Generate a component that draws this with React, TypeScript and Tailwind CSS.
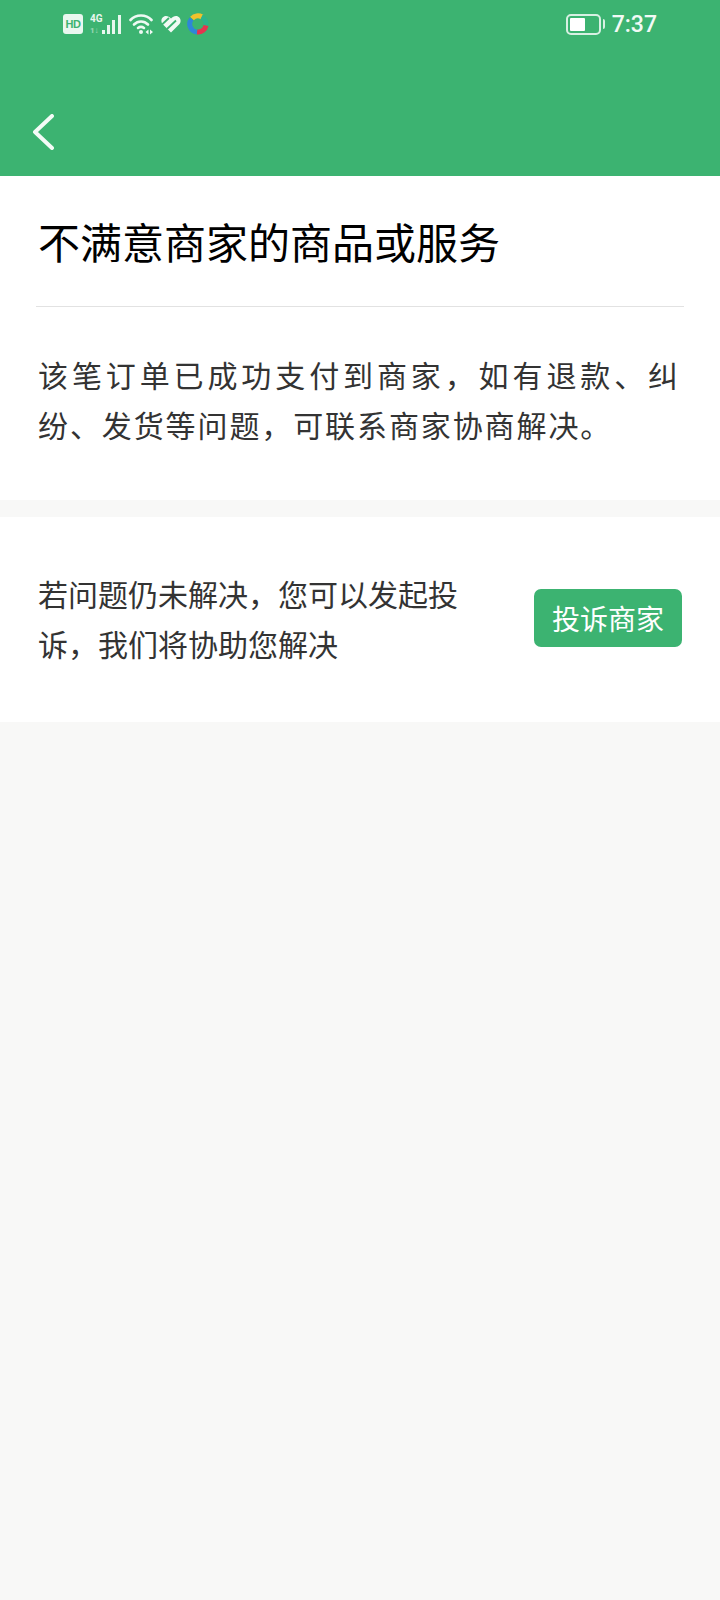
const FONT = "font-['Noto_Sans_CJK_SC','Noto_Sans',sans-serif]";

function StatusLeft() {
  return (
    <div className="flex items-center gap-[6.5px]">
      {/* HD */}
      <div className="flex h-[20px] w-[20px] items-center justify-center rounded-[3px] bg-[#e9f7ef] font-['Liberation_Sans',sans-serif] text-[11px] font-bold tracking-[-0.5px] text-[#3cb371]">
        HD
      </div>
      {/* 4G + signal */}
      <svg width="33" height="22" viewBox="0 0 33 22" className="text-[#e9f7ef]">
        <text x="0" y="9" fontSize="10" fontWeight="700" fill="currentColor" fontFamily="Roboto">4G</text>
        <text x="0" y="20" fontSize="8" fontWeight="700" fill="currentColor" opacity="0.55" fontFamily="Roboto">1↓</text>
        <rect x="12" y="17" width="3" height="4" fill="currentColor" />
        <rect x="17" y="12" width="3" height="9" fill="currentColor" />
        <rect x="22" y="7" width="3" height="14" fill="currentColor" />
        <rect x="28" y="2" width="3" height="19" fill="currentColor" />
      </svg>
      {/* wifi */}
      <svg width="25" height="22" viewBox="0 0 25 22" fill="none" stroke="#eef9f3" strokeWidth="2.6" strokeLinecap="round">
        <path d="M1.500 7C7 1 17 1 22.500 7" />
        <path d="M5 11.500C9 7.500 15 7.500 19 11.500" />
        <path d="M9 15C11 13.500 13 13.500 15 15" />
        <circle cx="12" cy="19" r="2" fill="#eef9f3" stroke="none" />
        <path d="M19.500 16.500v5L16.500 19zM21 16.500v5l3-2.500z" fill="#eef9f3" stroke="none" />
      </svg>
      {/* heart */}
      <svg width="20" height="18" viewBox="0 0 20 18">
        <path d="M10 17.500L1.500 9C-1 6 1 1 5 1c2 0 3.500 1 5 2.500C11.500 2 13 1 15 1c4 0 6 5 3.500 8z" fill="#f2faf5" />
        <path d="M1 9.500L8 3M6 14L15 5.500" stroke="#3cb371" strokeWidth="1.800" fill="none" />
      </svg>
      {/* app logo */}
      <svg width="22" height="22" viewBox="0 0 22 22" fill="none" strokeWidth="5">
        <path d="M5 5.500A8 8 0 0 1 15 4" stroke="#f0c22c" />
        <path d="M14.500 4A8 8 0 0 1 19 12.500" stroke="#2bb48a" />
        <path d="M19 12.500A8 8 0 0 1 10 19" stroke="#e5344f" />
        <path d="M10 19A8 8 0 0 1 4.500 6" stroke="#2f86d8" />
      </svg>
    </div>
  );
}

function StatusRight() {
  return (
    <div className="flex items-center">
      <div className="flex h-[21px] w-[35px] items-center rounded-[5px] border-2 border-[#d8f0e3] p-[2px]">
        <div className="h-full w-[15px] rounded-[1px] bg-white" />
      </div>
      <div className="mr-[7px] ml-[2px] h-[10px] w-[2px] rounded-r-[2px] bg-[#d8f0e3]" />
      <span className="font-['Roboto',sans-serif] text-[23px] leading-none font-medium text-[#f2faf5]">7:37</span>
    </div>
  );
}

export default function App() {
  return (
    <div className={`${FONT} flex min-h-[1600px] w-[720px] flex-col bg-[#f8f8f7]`}>
      {/* Header */}
      <header className="h-[176px] bg-[#3cb371]">
        <div className="flex h-[48px] items-center justify-between pr-[63px] pl-[63px]">
          <StatusLeft />
          <StatusRight />
        </div>
        <div className="flex h-[128px] items-end pb-[26px] pl-[32px]">
          <svg width="22" height="36" viewBox="0 0 22 36" fill="none" stroke="#f4fbf7" strokeWidth="4" strokeLinecap="round" strokeLinejoin="round">
            <path d="M20 2 L3 18 L20 34" />
          </svg>
        </div>
      </header>

      {/* Reason */}
      <section className="bg-white">
        <div className="mx-[36px] border-b border-[#e2e2e2] pt-[34px] pb-[34px]">
          <h1 className="pl-[2px] text-[42px] leading-[62px] font-normal text-black">不满意商家的商品或服务</h1>
        </div>
        <p className="pt-[42px] pr-[40px] pb-[51px] pl-[38px] text-justify text-[30px] leading-[50px] tracking-[1.9px] text-[#333]">
          该笔订单已成功支付到商家，如有退款、纠纷、发货等问题，可联系商家协商解决。
        </p>
      </section>

      {/* Complaint */}
      <section className="mt-[17px] flex h-[205px] items-center justify-between bg-white pr-[38px] pb-[4px] pl-[38px]">
        <p className="w-[430px] text-[30px] leading-[50px] text-[#333]">若问题仍未解决，您可以发起投诉，我们将协助您解决</p>
        <button className="h-[58px] w-[148px] rounded-[7px] bg-[#3cb371] text-[28px] leading-none text-white">投诉商家</button>
      </section>
    </div>
  );
}
